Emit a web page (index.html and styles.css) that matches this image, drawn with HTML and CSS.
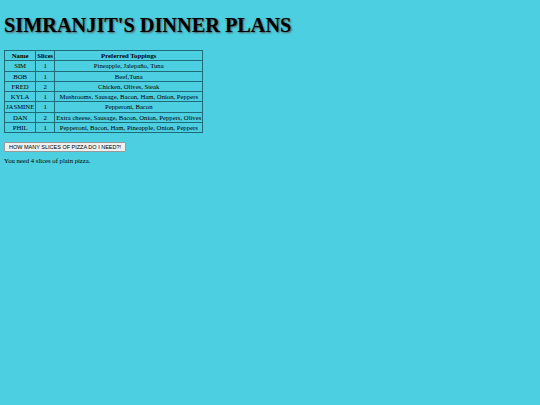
FILE: index.html
```html
<!DOCTYPE html>
<html>
<head>
<meta charset="utf-8">
<link rel="stylesheet" href="styles.css">
</head>
<body>
<h1 class="title">SIMRANJIT'S DINNER PLANS</h1>
<table class="plans">
<tr><th>Name</th><th>Slices</th><th>Preferred Toppings</th></tr>
<tr><td>SIM</td><td>1</td><td>Pineapple, Jalepaño, Tuna</td></tr>
<tr><td>BOB</td><td>1</td><td>Beef,Tuna</td></tr>
<tr><td>FRED</td><td>2</td><td>Chicken, Olives, Steak</td></tr>
<tr><td>KYLA</td><td>1</td><td>Mushrooms, Sausage, Bacon, Ham, Onion, Peppers</td></tr>
<tr><td>JASMINE</td><td>1</td><td>Pepperoni, Bacon</td></tr>
<tr><td>DAN</td><td>2</td><td>Extra cheese, Sausage, Bacon, Onion, Peppers, Olives</td></tr>
<tr><td>PHIL</td><td>1</td><td>Pepperoni, Bacon, Ham, Pineapple, Onion, Peppers</td></tr>
</table>
<button class="ask">HOW MANY SLICES OF PIZZA DO I NEED?!</button>
<p class="result">You need 4 slices of plain pizza.</p>
</body>
</html>
```
FILE: styles.css
```css
html, body {
  background: #4ccfe1;
}
body {
  margin: 0;
  padding: 13px 4px;
  font-family: "Liberation Serif", serif;
  color: #000;
}
.title {
  margin: 0 0 13px;
  font-size: 20.3px;
  line-height: 24px;
  font-weight: bold;
  text-shadow: 1px 1px 2px #555;
}
.plans {
  border-collapse: collapse;
  border: 1px solid #1f6b78;
  font-size: 6.7px;
}
.plans th, .plans td {
  border: 1px solid #1f6b78;
  text-align: center;
  padding: 0 1px;
  height: 9.3px;
  line-height: 9.3px;
}
.plans th {
  font-weight: bold;
}
.ask {
  display: block;
  margin-top: 9px;
  font-family: "Liberation Sans", sans-serif;
  font-size: 5.5px;
  padding: 1px 4px;
  background: #f0f0f0;
  border: 1px solid #999;
  border-radius: 1px;
}
.result {
  margin: 5px 0 0;
  font-size: 6.7px;
}
```
